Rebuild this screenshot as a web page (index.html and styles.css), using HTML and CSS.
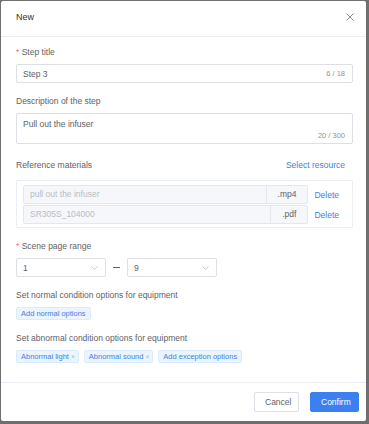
FILE: index.html
```html
<!DOCTYPE html>
<html>
<head>
<meta charset="utf-8">
<link rel="stylesheet" href="styles.css">
</head>
<body>
<div class="dialog">
  <div class="dlg-header">
    <span class="dlg-title">New</span>
    <svg class="close" width="8" height="8" viewBox="0 0 8 8"><path d="M0.5 0.5 L7.5 7.5 M7.5 0.5 L0.5 7.5" stroke="#8a8d93" stroke-width="1" fill="none"/></svg>
  </div>
  <div class="dlg-body">
    <div class="label"><span class="req">*</span> Step title</div>
    <div class="input">
      <span class="val">Step 3</span>
      <span class="count">6 / 18</span>
    </div>

    <div class="label mt12">Description of the step</div>
    <div class="textarea">
      <span class="val">Pull out the infuser</span>
      <span class="count tcount">20 / 300</span>
    </div>

    <div class="label-row">
      <span class="label-text">Reference materials</span>
      <span class="link">Select resource</span>
    </div>
    <div class="ref-box">
      <div class="ref-row">
        <div class="group">
          <span class="g-input">pull out the infuser</span>
          <span class="g-addon">.mp4</span>
        </div>
        <span class="link del">Delete</span>
      </div>
      <div class="ref-row">
        <div class="group">
          <span class="g-input">SR305S_104000</span>
          <span class="g-addon">.pdf</span>
        </div>
        <span class="link del">Delete</span>
      </div>
    </div>

    <div class="label mt12"><span class="req">*</span> Scene page range</div>
    <div class="range">
      <div class="select"><span class="val">1</span>
        <svg width="7" height="4" viewBox="0 0 7 4"><path d="M0.5 0.5 L3.5 3.3 L6.5 0.5" stroke="#b8bcc4" stroke-width="0.8" fill="none"/></svg>
      </div>
      <span class="dash"></span>
      <div class="select"><span class="val">9</span>
        <svg width="7" height="4" viewBox="0 0 7 4"><path d="M0.5 0.5 L3.5 3.3 L6.5 0.5" stroke="#b8bcc4" stroke-width="0.8" fill="none"/></svg>
      </div>
    </div>

    <div class="label mt12">Set normal condition options for equipment</div>
    <div class="tags">
      <span class="tag">Add normal options</span>
    </div>

    <div class="label mt12">Set abnormal condition options for equipment</div>
    <div class="tags">
      <span class="tag closable">Abnormal light <span class="x">×</span></span>
      <span class="tag closable">Abnormal sound <span class="x">×</span></span>
      <span class="tag">Add exception options</span>
    </div>
  </div>
  <div class="dlg-footer">
    <button class="btn">Cancel</button>
    <button class="btn primary">Confirm</button>
  </div>
</div>
</body>
</html>
```

FILE: styles.css
```css
html, body {
  margin: 0;
  padding: 0;
}
body {
  background: #6f6f6f;
  width: 369px;
  height: 424px;
  overflow: hidden;
  font-family: "Liberation Sans", Arial, sans-serif;
  font-size: 8.5px;
  color: #606266;
}
.dialog {
  margin: 1px 0 0 1px;
  width: 365px;
  height: 420px;
  background: #fff;
  border-radius: 2px;
  display: flex;
  flex-direction: column;
  box-sizing: border-box;
}
.dlg-header {
  height: 36px;
  border-bottom: 1px solid #ebeef5;
  display: flex;
  align-items: center;
  justify-content: space-between;
  padding: 0 12px 3px 15px;
  box-sizing: border-box;
  flex: none;
}
.dlg-title {
  font-size: 9px;
  color: #303133;
}
.close {
  display: block;
}
.dlg-body {
  flex: 1;
  padding: 9px 13px 0 15px;
  display: flex;
  flex-direction: column;
}
.label {
  line-height: 12px;
  height: 12px;
  margin-bottom: 6px;
  color: #606266;
}
.mt12 { margin-top: 12px; }
.req { color: #f56c6c; }
.input {
  height: 19px;
  border: 1px solid #dcdfe6;
  border-radius: 2px;
  box-sizing: border-box;
  display: flex;
  align-items: center;
  justify-content: space-between;
  padding: 0 7px 0 6px;
}
.val { color: #606266; }
.count {
  font-size: 7.5px;
  color: #909399;
}
.textarea {
  height: 31px;
  border: 1px solid #dcdfe6;
  border-radius: 2px;
  box-sizing: border-box;
  position: relative;
  padding: 4px 6px;
  line-height: 12px;
}
.tcount {
  position: absolute;
  right: 7px;
  bottom: 1px;
}
.label-row {
  margin-top: 15px;
  height: 12px;
  line-height: 12px;
  display: flex;
  justify-content: space-between;
  padding-right: 8px;
  margin-bottom: 9px;
}
.link { color: #3d7ee8; }
.ref-box {
  border: 1px solid #ebeef5;
  border-radius: 2px;
  padding: 4px 13px 3px 6px;
  display: flex;
  flex-direction: column;
  gap: 1px;
  height: 48px;
  box-sizing: border-box;
}
.ref-row {
  display: flex;
  align-items: center;
  height: 19px;
}
.group {
  flex: 1;
  display: flex;
  height: 19px;
  background: #f5f7fa;
  border: 1px solid #e4e7ed;
  border-radius: 2px;
  box-sizing: border-box;
}
.g-input {
  flex: 1;
  color: #b8bcc4;
  padding-left: 6px;
  line-height: 17px;
}
.g-addon {
  border-left: 1px solid #e4e7ed;
  padding: 0 11px;
  line-height: 17px;
  color: #606266;
}
.del {
  margin-left: 6px;
}
.range {
  display: flex;
  align-items: center;
}
.select {
  width: 90px;
  height: 19px;
  border: 1px solid #dcdfe6;
  border-radius: 2px;
  box-sizing: border-box;
  display: flex;
  align-items: center;
  justify-content: space-between;
  padding: 0 7px 0 6px;
}
.select svg { display: block; }
.dash {
  width: 7px;
  height: 1.5px;
  background: #606266;
  margin: 0 7px;
}
.tags {
  display: flex;
  gap: 5px;
}
.tag {
  height: 13px;
  line-height: 11px;
  box-sizing: border-box;
  padding: 0 4px;
  font-size: 7.5px;
  color: #3d7ee8;
  background: #ecf5ff;
  border: 1px solid #d9ecff;
  border-radius: 2px;
  white-space: nowrap;
}
.tag.closable {
  padding-right: 3px;
}
.x {
  color: #8fb6ee;
  margin-left: 0;
  font-size: 6.5px;
}
.dlg-footer {
  flex: none;
  height: 39px;
  border-top: 1px solid #ebeef5;
  display: flex;
  justify-content: flex-end;
  align-items: flex-start;
  gap: 11px;
  padding: 9px 7px 0 0;
  box-sizing: border-box;
}
.btn {
  height: 20px;
  font-family: "Liberation Sans", Arial, sans-serif;
  font-size: 8.5px;
  border: 1px solid #dcdfe6;
  background: #fff;
  color: #606266;
  border-radius: 2px;
  padding: 0 10px;
  width: 45px;
  box-sizing: border-box;
}
.btn.primary {
  width: 49px;
  background: #3b7ff0;
  border-color: #3b7ff0;
  color: #fff;
}
```
